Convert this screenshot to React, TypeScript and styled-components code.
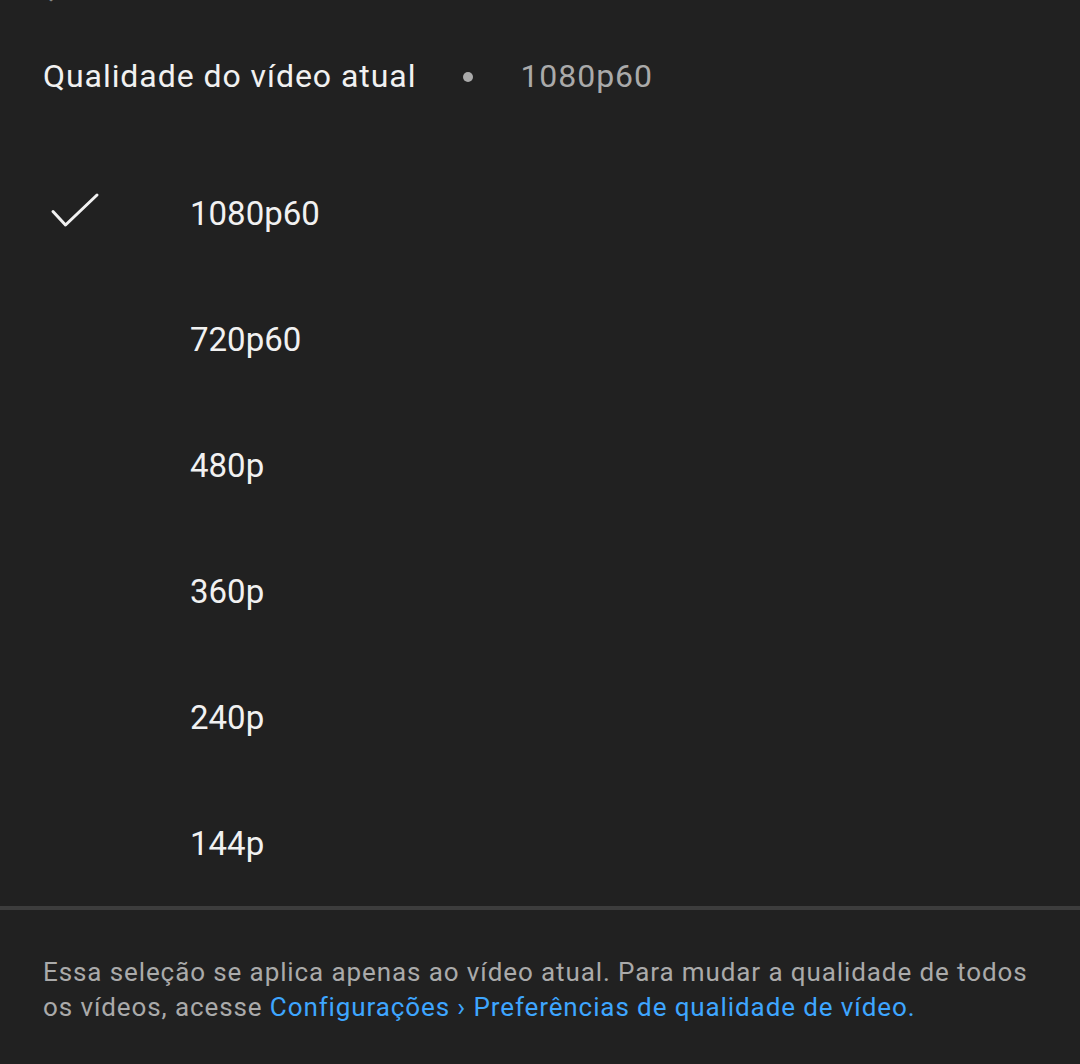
import React from 'react'
import styled, { createGlobalStyle } from 'styled-components'

const GlobalStyle = createGlobalStyle`
  html, body {
    margin: 0;
    padding: 0;
    background: #212121;
  }
  body {
    font-family: Roboto, "Noto Sans", "Liberation Sans", sans-serif;
    -webkit-font-smoothing: antialiased;
  }
`

const Sheet = styled.div`
  width: 1080px;
  height: 1064px;
  background: #212121;
  color: #f1f1f1;
  overflow: hidden;
  display: flex;
  flex-direction: column;
`

// bottom edge of the previous screen's row, mostly scrolled away
const Peek = styled.div`
  height: 2px;
  overflow: hidden;
  display: flex;
  align-items: flex-end;
  gap: 24px;
  padding-left: 33px;
  color: #8a8a8a;
  font-size: 32px;
  line-height: 2px;

  span {
    display: block;
    transform: translateY(-14px);
  }
`

const Header = styled.div`
  height: 148px;
  display: flex;
  align-items: center;
  padding-left: 43px;
  font-size: 32px;
  letter-spacing: 0.95px;
`

const Title = styled.span`
  color: #f1f1f1;
`

const Dot = styled.span`
  width: 10px;
  height: 10px;
  border-radius: 50%;
  background: #aaaaaa;
  margin: 2px 47px 0 47px;
`

const Current = styled.span`
  color: #aaaaaa;
`

const List = styled.div`
  display: flex;
  flex-direction: column;
`

const Option = styled.div`
  height: 126px;
  display: grid;
  grid-template-columns: 64px 1fr;
  column-gap: 83px;
  align-items: center;
  padding-left: 43px;
  font-size: 33px;
  color: #f1f1f1;
`

const IconCell = styled.div`
  height: 40px;
  display: flex;
  align-items: center;
  justify-content: center;
  transform: translateY(-2px);
`

const Divider = styled.div`
  height: 4px;
  background: #3d3d3d;
`

const Note = styled.p`
  margin: 0;
  padding: 45px 40px 0 43px;
  font-size: 26px;
  line-height: 35px;
  color: #aaaaaa;
  letter-spacing: 0.9px;
`

const Link = styled.span`
  color: #3ea6ff;
`

const Check = () => (
  <svg width="50" height="38" viewBox="0 0 50 38" fill="none">
    <path
      d="M3 19.5 L15.5 33 L47 3"
      stroke="#f1f1f1"
      strokeWidth="3"
      strokeLinecap="round"
      strokeLinejoin="round"
    />
  </svg>
)

const qualities = ['1080p60', '720p60', '480p', '360p', '240p', '144p']

const App = () => {
  const selected = '1080p60'

  return (
    <>
      <GlobalStyle />
      <Sheet>
        <Peek>
          <span>Qualidade</span>
          <span>Auto</span>
        </Peek>
        <Header>
          <Title>Qualidade do vídeo atual</Title>
          <Dot />
          <Current>1080p60</Current>
        </Header>
        <List>
          {qualities.map(q => (
            <Option key={q}>
              <IconCell>{q === selected && <Check />}</IconCell>
              <span>{q}</span>
            </Option>
          ))}
        </List>
        <Divider />
        <Note>
          Essa seleção se aplica apenas ao vídeo atual. Para mudar a qualidade de todos os vídeos, acesse{' '}
          <Link>Configurações › Preferências de qualidade de vídeo.</Link>
        </Note>
      </Sheet>
    </>
  )
}

export default App
